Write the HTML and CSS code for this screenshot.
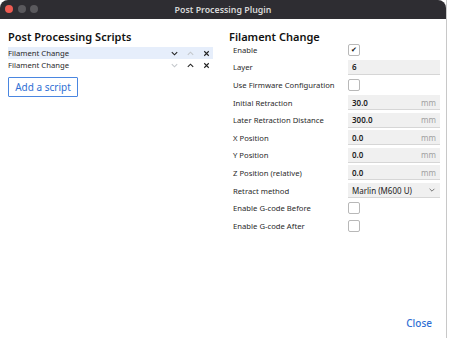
FILE: index.html
```html
<!DOCTYPE html>
<html lang="en">
<head>
  <meta charset="UTF-8">
  <meta name="viewport" content="width=device-width, initial-scale=1.0">
  <title>Post Processing Plugin</title>
  <link rel="stylesheet" href="styles.css">
</head>
<body>
  <div class="window">
    <div class="titlebar">
      <div class="lights">
        <span class="light red"></span>
        <span class="light"></span>
        <span class="light"></span>
      </div>
      <div class="title">Post Processing Plugin</div>
    </div>

    <div class="content">
      <div class="scripts">
        <h2 class="heading">Post Processing Scripts</h2>
        <div class="script-list">
          <div class="script-row active">
            <span class="script-name">Filament Change</span>
            <span class="script-tools">
              <svg class="tool" viewBox="0 0 10 10"><path d="M2 3.5 L5 6.5 L8 3.5" /></svg>
              <svg class="tool off" viewBox="0 0 10 10"><path d="M2 6.5 L5 3.5 L8 6.5" /></svg>
              <svg class="tool" viewBox="0 0 10 10"><path d="M2.5 2.5 L7.5 7.5 M7.5 2.5 L2.5 7.5" /></svg>
            </span>
          </div>
          <div class="script-row">
            <span class="script-name">Filament Change</span>
            <span class="script-tools">
              <svg class="tool off" viewBox="0 0 10 10"><path d="M2 3.5 L5 6.5 L8 3.5" /></svg>
              <svg class="tool" viewBox="0 0 10 10"><path d="M2 6.5 L5 3.5 L8 6.5" /></svg>
              <svg class="tool" viewBox="0 0 10 10"><path d="M2.5 2.5 L7.5 7.5 M7.5 2.5 L2.5 7.5" /></svg>
            </span>
          </div>
        </div>
        <button class="add-btn">Add a script</button>
      </div>

      <div class="settings">
        <h2 class="heading">Filament Change</h2>
        <div class="settings-grid">
          <div class="label">Enable</div>
          <div class="control"><span class="check on">&#10004;</span></div>

          <div class="label">Layer</div>
          <div class="control"><div class="field">6</div></div>

          <div class="label">Use Firmware Configuration</div>
          <div class="control"><span class="check"></span></div>

          <div class="label">Initial Retraction</div>
          <div class="control"><div class="field">30.0<span class="unit">mm</span></div></div>

          <div class="label">Later Retraction Distance</div>
          <div class="control"><div class="field">300.0<span class="unit">mm</span></div></div>

          <div class="label">X Position</div>
          <div class="control"><div class="field">0.0<span class="unit">mm</span></div></div>

          <div class="label">Y Position</div>
          <div class="control"><div class="field">0.0<span class="unit">mm</span></div></div>

          <div class="label">Z Position (relative)</div>
          <div class="control"><div class="field">0.0<span class="unit">mm</span></div></div>

          <div class="label">Retract method</div>
          <div class="control">
            <div class="field select">Marlin (M600 U)
              <svg class="caret" viewBox="0 0 10 10"><path d="M2 3.5 L5 6.5 L8 3.5" /></svg>
            </div>
          </div>

          <div class="label">Enable G-code Before</div>
          <div class="control"><span class="check"></span></div>

          <div class="label">Enable G-code After</div>
          <div class="control"><span class="check"></span></div>
        </div>
      </div>
    </div>

    <div class="footer">
      <button class="close-btn">Close</button>
    </div>
  </div>
</body>
</html>
```

FILE: styles.css
```css
body {
  font-family: "Noto Sans", "Open Sans", sans-serif;
  margin: 0;
  padding: 0;
  background-color: #ffffff;
  color: #1f1f1f;
  overflow: hidden;
}

.window {
  width: 447px;
  height: 338px;
  border-right: 1px solid #c8c8c8;
  box-sizing: border-box;
  display: flex;
  flex-direction: column;
}

.titlebar {
  height: 19px;
  background-color: #2e2d32;
  border-radius: 8px 8px 0 0;
  display: flex;
  align-items: center;
  position: relative;
}

/* traffic lights sit over the bar so the title stays centred */
.lights {
  position: absolute;
  left: 5px;
  top: 5px;
  display: flex;
  gap: 4.5px;
}

.light {
  width: 8px;
  height: 8px;
  border-radius: 50%;
  background-color: #5a595d;
}

.light.red {
  background-color: #ee5b52;
}

.title {
  flex: 1;
  text-align: center;
  font-size: 8.8px;
  font-weight: 600;
  color: #d8d8d8;
}

.content {
  flex: 1;
  display: flex;
  padding: 10px 0 0 8px;
}

.heading {
  font-size: 11px;
  font-weight: 600;
  margin: 0;
  line-height: 15px;
  color: #111111;
}

.scripts {
  width: 205px;
}

.script-list {
  margin-top: 3px;
}

.script-row {
  height: 12px;
  display: flex;
  align-items: center;
  justify-content: space-between;
  font-size: 7.7px;
  color: #2a2a2a;
}

.script-row.active {
  background-color: #e6eefb;
}

.script-tools {
  display: flex;
  gap: 7px;
  padding-right: 2px;
}

.tool {
  width: 9px;
  height: 9px;
  fill: none;
  stroke: #222222;
  stroke-width: 1.2;
}

.tool.off {
  stroke: #c4c8cc;
}

.add-btn {
  margin-top: 6px;
  height: 20px;
  width: 70px;
  padding: 0;
  background: #ffffff;
  border: 1px solid #4a86e0;
  border-radius: 1px;
  color: #2f6fd4;
  font-family: inherit;
  font-size: 10px;
}

.settings {
  margin-left: 16px;
  width: 212px;
}

.settings-grid {
  margin-top: -3px;
  display: grid;
  grid-template-columns: 115px 92px;
  grid-auto-rows: 17.6px;
  margin-left: 4px;
}

.label {
  font-size: 7.7px;
  color: #2a2a2a;
  display: flex;
  align-items: center;
}

.control {
  display: flex;
  align-items: center;
}

.field {
  flex: 1;
  height: 15px;
  background-color: #f0f0f0;
  border-bottom: 1px solid #d6d6d6;
  box-sizing: border-box;
  display: flex;
  align-items: center;
  justify-content: space-between;
  padding: 0 4px;
  font-size: 8px;
  font-weight: 600;
  color: #222222;
}

.field.select {
  font-weight: 400;
}

.unit {
  font-weight: 400;
  color: #a0a0a0;
}

.caret {
  width: 8px;
  height: 8px;
  fill: none;
  stroke: #555555;
  stroke-width: 1;
}

.check {
  width: 10px;
  height: 10px;
  border: 1px solid #b8b8b8;
  border-radius: 2px;
  background: #ffffff;
  display: flex;
  align-items: center;
  justify-content: center;
  font-size: 7px;
  color: #111111;
}

.footer {
  display: flex;
  justify-content: flex-end;
  padding: 0 14px 8px 0;
}

.close-btn {
  background: none;
  border: none;
  padding: 0;
  color: #2f6fd4;
  font-family: inherit;
  font-size: 10px;
  font-weight: 500;
}
```
